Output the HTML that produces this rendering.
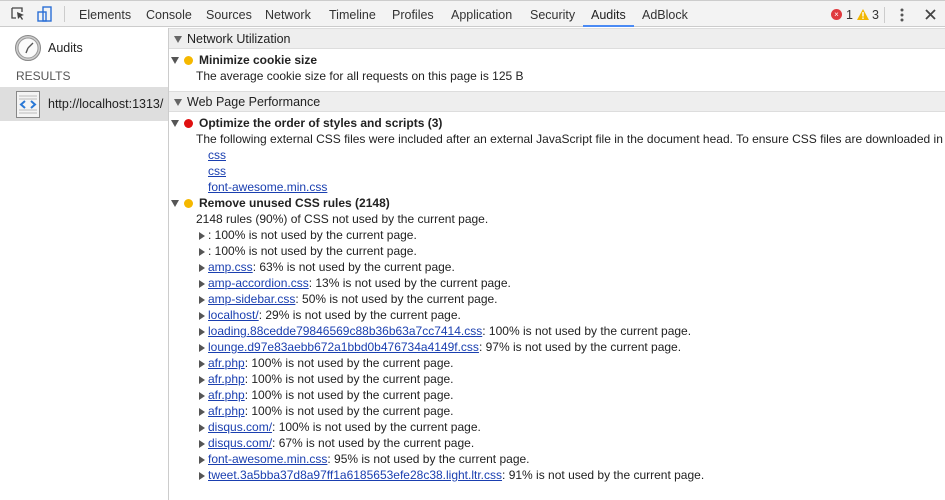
<!DOCTYPE html><html><head><style>
body{margin:0;width:945px;height:500px;overflow:hidden;font-family:"Liberation Sans",sans-serif;font-size:12px;color:#222;background:#fff;position:relative}
.tb{position:absolute;left:0;top:0;width:945px;height:27px;background:#f3f3f3;border-bottom:1px solid #ccc;border-top:1px solid #ccc;box-sizing:border-box}
.tab{position:absolute;top:7px;font-size:12.5px;color:#333}
.side{position:absolute;left:0;top:28px;width:168px;height:472px;border-right:1px solid #ccc;background:#fff}
.a{position:absolute;white-space:nowrap}
.hd{position:absolute;left:169px;width:776px;height:21px;background:#eee;border-bottom:1px solid #ddd;border-top:1px solid #ddd;box-sizing:border-box}
.hd span{position:absolute;left:18px;top:3px;font-size:12.5px}
.tri{position:absolute;width:0;height:0;border-left:4px solid transparent;border-right:4px solid transparent;border-top:7px solid #555}
.rt{position:absolute;width:0;height:0;border-top:4px solid transparent;border-bottom:4px solid transparent;border-left:6px solid #555}
.dot{position:absolute;width:9px;height:9px;border-radius:50%}
.y{background:#f5b800}.r{background:#e01010}
a{color:#1a3fb0;text-decoration:underline}
</style></head><body>
<div class="tb">
<svg class="a" style="left:11px;top:6px" width="14" height="14"><path d="M1 1h10v4M1 1v10h4" fill="none" stroke="#444" stroke-width="1.3"/><path d="M6 5l7 3-3 1 2 3-1 1-2-3-2 2z" fill="#444"/></svg>
<svg class="a" style="left:37px;top:5px" width="16" height="16"><rect x="1" y="6" width="8" height="9" fill="none" stroke="#2a6fd6" stroke-width="1.4"/><rect x="6" y="1" width="8" height="14" fill="none" stroke="#2a6fd6" stroke-width="1.4"/></svg>
<div class="a" style="left:64px;top:5px;width:1px;height:16px;background:#ccc"></div>
<span class="tab" style="left:79px">Elements</span><span class="tab" style="left:146px">Console</span><span class="tab" style="left:206px">Sources</span><span class="tab" style="left:265px">Network</span><span class="tab" style="left:329px">Timeline</span><span class="tab" style="left:392px">Profiles</span><span class="tab" style="left:451px">Application</span><span class="tab" style="left:530px">Security</span><span class="tab" style="left:591px;color:#222">Audits</span><span class="tab" style="left:642px">AdBlock</span>
<div class="a" style="left:583px;top:24px;width:51px;height:2px;background:#4a8af4"></div>
<div class="a" style="left:831px;top:8px;width:11px;height:11px;border-radius:50%;background:#e0393e;color:#fff;font-size:8px;text-align:center;line-height:11px">×</div>
<span class="tab" style="left:846px">1</span>
<svg class="a" style="left:857px;top:8px" width="12" height="11"><path d="M6 0L12 11H0z" fill="#f2b600"/><rect x="5.3" y="3" width="1.4" height="4.5" fill="#fff"/><rect x="5.3" y="8.5" width="1.4" height="1.4" fill="#fff"/></svg>
<span class="tab" style="left:872px">3</span>
<div class="a" style="left:884px;top:6px;width:1px;height:16px;background:#ccc"></div>
<svg class="a" style="left:899px;top:6px" width="6" height="16"><circle cx="3" cy="3" r="1.5" fill="#555"/><circle cx="3" cy="8" r="1.5" fill="#555"/><circle cx="3" cy="13" r="1.5" fill="#555"/></svg>
<svg class="a" style="left:925px;top:8px" width="11" height="11"><path d="M1 1L10 10M10 1L1 10" stroke="#444" stroke-width="1.8"/></svg>
</div>
<div class="side">
<svg class="a" style="left:14px;top:6px" width="28" height="28"><circle cx="14" cy="14" r="12.5" fill="#ccc" stroke="#888"/><circle cx="14" cy="14" r="10" fill="#fafafa" stroke="#999"/><path d="M14 14L19 9M14 14L12 19" stroke="#555" stroke-width="1.4"/></svg>
<span class="a" style="left:48px;top:13px;font-size:12.5px">Audits</span>
<span class="a" style="left:16px;top:41px;color:#555;font-size:12px">RESULTS</span>
<div class="a" style="left:0;top:59px;width:168px;height:34px;background:#dedede"></div>
<svg class="a" style="left:16px;top:63px" width="24" height="27"><rect x="0.5" y="0.5" width="23" height="26" fill="#f4f4f4" stroke="#888"/><path d="M3 5h18M3 8h18M3 19h18M3 22h18" stroke="#bbb"/><path d="M9 10l-4 3.5 4 3.5M15 10l4 3.5-4 3.5" fill="none" stroke="#2a78d6" stroke-width="2"/></svg>
<span class="a" style="left:48px;top:69px;font-size:12.5px">http://localhost:1313/</span>
</div>
<div class="hd" style="top:28px"><div class="tri" style="left:5px;top:7px;border-top-color:#666"></div><span>Network Utilization</span></div>
<div class="tri" style="left:171px;top:57px"></div><div class="dot y" style="left:184px;top:56px"></div>
<b class="a" style="left:199px;top:53px">Minimize cookie size</b>
<span class="a" style="left:196px;top:69px">The average cookie size for all requests on this page is 125 B</span>
<div class="hd" style="top:91px"><div class="tri" style="left:5px;top:7px;border-top-color:#666"></div><span>Web Page Performance</span></div>
<div class="tri" style="left:171px;top:120px"></div><div class="dot r" style="left:184px;top:119px"></div>
<b class="a" style="left:199px;top:116px">Optimize the order of styles and scripts (3)</b>
<span class="a" style="left:196px;top:132px">The following external CSS files were included after an external JavaScript file in the document head. To ensure CSS files are downloaded in parallel</span>
<a class="a" style="left:208px;top:148px">css</a><a class="a" style="left:208px;top:164px">css</a><a class="a" style="left:208px;top:180px">font-awesome.min.css</a>
<div class="tri" style="left:171px;top:200px"></div><div class="dot y" style="left:184px;top:199px"></div>
<b class="a" style="left:199px;top:196px">Remove unused CSS rules (2148)</b>
<span class="a" style="left:196px;top:212px">2148 rules (90%) of CSS not used by the current page.</span>
<div id="L"></div>
<script>
var rows=[["",": 100% is not used by the current page."],["",": 100% is not used by the current page."],["amp.css",": 63% is not used by the current page."],["amp-accordion.css",": 13% is not used by the current page."],["amp-sidebar.css",": 50% is not used by the current page."],["localhost/",": 29% is not used by the current page."],["loading.88cedde79846569c88b36b63a7cc7414.css",": 100% is not used by the current page."],["lounge.d97e83aebb672a1bbd0b476734a4149f.css",": 97% is not used by the current page."],["afr.php",": 100% is not used by the current page."],["afr.php",": 100% is not used by the current page."],["afr.php",": 100% is not used by the current page."],["afr.php",": 100% is not used by the current page."],["disqus.com/",": 100% is not used by the current page."],["disqus.com/",": 67% is not used by the current page."],["font-awesome.min.css",": 95% is not used by the current page."],["tweet.3a5bba37d8a97ff1a6185653efe28c38.light.ltr.css",": 91% is not used by the current page."]];
var h="";rows.forEach(function(r,i){var y=228+i*16;h+='<div class="rt" style="left:199px;top:'+(y+4)+'px"></div><span class="a" style="left:208px;top:'+y+'px">'+(r[0]?'<a>'+r[0]+'</a>':'')+r[1]+'</span>';});
document.getElementById("L").innerHTML=h;
</script>
</body></html>
